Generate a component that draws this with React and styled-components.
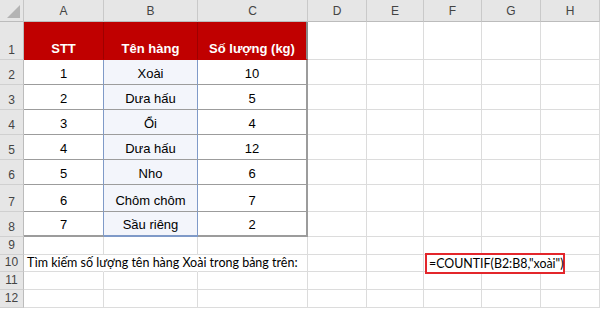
import React from 'react';
import styled, { createGlobalStyle } from 'styled-components';

const GlobalStyle = createGlobalStyle`
  html, body {
    margin: 0;
    padding: 0;
    background: #ffffff;
  }
  body {
    font-family: "Liberation Sans", Arial, sans-serif;
  }
`;

const COLS = ['A', 'B', 'C', 'D', 'E', 'F', 'G', 'H'];

const Sheet = styled.div`
  display: grid;
  grid-template-columns: 24px 80px 94px 110px 59px 57px 58px 59px 59px;
  grid-template-rows: 22px 38px 25px 25px 25px 25px 25px 27px 25px 18px 17px 18px 18px;
  width: 600px;
  height: 310px;
  background: #ffffff;
  overflow: hidden;
`;

const Corner = styled.div`
  position: relative;
  background: #e6e6e6;
  border-right: 1px solid #c6c6c6;
  border-bottom: 1px solid #bcbcbc;
  box-sizing: border-box;

  &::after {
    content: '';
    position: absolute;
    right: 3px;
    bottom: 3px;
    width: 0;
    height: 0;
    border-left: 13px solid transparent;
    border-bottom: 13px solid #b4b4b4;
  }
`;

const ColHead = styled.div`
  display: flex;
  align-items: center;
  justify-content: center;
  background: #e6e6e6;
  border-right: 1px solid #c9c9c9;
  border-bottom: 1px solid #bcbcbc;
  box-sizing: border-box;
  color: #444444;
  font-size: 12px;
  padding-top: 1px;
`;

const RowHead = styled.div`
  display: flex;
  align-items: flex-end;
  justify-content: center;
  padding-bottom: 2px;
  background: #e6e6e6;
  border-right: 1px solid #bcbcbc;
  border-bottom: 1px solid #d0d0d0;
  box-sizing: border-box;
  color: #444444;
  font-size: 12px;
`;

const Cell = styled.div`
  display: flex;
  align-items: ${p => (p.$middle ? 'center' : 'flex-end')};
  justify-content: ${p => (p.$left ? 'flex-start' : 'center')};
  padding: ${p => (p.$left ? '0 0 1px 3px' : '0 0 3px')};
  box-sizing: border-box;
  background: ${p => p.$bg || 'transparent'};
  border-right: 1px solid ${p => p.$rc || '#dcdcdc'};
  border-right-width: ${p => p.$rw || 1}px;
  border-bottom: 1px solid ${p => p.$bc || '#dcdcdc'};
  border-bottom-width: ${p => p.$bw || 1}px;
  color: ${p => p.$color || '#000000'};
  font-weight: ${p => (p.$bold ? 700 : 400)};
  font-size: 13px;
  white-space: nowrap;
  overflow: visible;
  position: relative;
`;

const Note = styled.span`
  font-family: Lato, "Liberation Sans", sans-serif;
  font-size: 12.5px;
  color: #000000;
`;

const Formula = styled.span`
  position: relative;
  z-index: 2;
  display: inline-flex;
  align-items: center;
  width: 141px;
  height: 21px;
  box-sizing: border-box;
  margin-left: 1px;
  padding: 0 0 0 2px;
  border: 2px solid #e3262b;
  background: #ffffff;
  font-family: Lato, "Liberation Sans", sans-serif;
  font-size: 12.4px;
  color: #000000;
`;

const header = ['STT', 'Tên hàng', 'Số lượng (kg)'];

const data = [
  [1, 'Xoài', 10],
  [2, 'Dưa hấu', 5],
  [3, 'Ổi', 4],
  [4, 'Dưa hấu', 12],
  [5, 'Nho', 6],
  [6, 'Chôm chôm', 7],
  [7, 'Sầu riêng', 2],
];

const TABLE_LINE = '#9c9c9c';
const BLUE = '#7f9ac8';

function tableCell(r, c) {
  // r: sheet row (1-based), c: column index (0 = A)
  if (r === 1) {
    return (
      <Cell
        key={c}
        $bg="#c00000"
        $color="#ffffff"
        $bold
        $rc={c === 2 ? '#8a8a8a' : '#9e0000'}
        $rw={c === 2 ? 2 : 1}
        $bc="#c00000"
      >
        {header[c]}
      </Cell>
    );
  }
  const value = data[r - 2][c];
  const last = r === 8;
  if (c === 1) {
    return (
      <Cell key={c} $bg="#f3f5fb" $rc={BLUE} $bc={last ? BLUE : TABLE_LINE} $bw={last ? 2 : 1}>
        {value}
      </Cell>
    );
  }
  return (
    <Cell
      key={c}
      $rc={c === 0 ? BLUE : TABLE_LINE}
      $rw={c === 2 ? 2 : 1}
      $bc={TABLE_LINE}
      $bw={last ? 2 : 1}
    >
      {value}
    </Cell>
  );
}

function rowCells(r) {
  return COLS.map((col, c) => {
    if (r <= 8 && c < 3) return tableCell(r, c);
    if (r === 10) {
      if (c === 0) {
        return (
          <Cell key={c} $left $middle $rc="transparent">
            <Note>Tìm kiếm số lượng tên hàng Xoài trong bảng trên:</Note>
          </Cell>
        );
      }
      if (c === 1) return <Cell key={c} $rc="transparent" />;
      if (c === 5) {
        return (
          <Cell key={c} $left $middle $rc="transparent" style={{ padding: 0 }}>
            <Formula>=COUNTIF(B2:B8,"xoài")</Formula>
          </Cell>
        );
      }
      if (c === 6) return <Cell key={c} $rc="transparent" />;
    }
    return <Cell key={c} />;
  });
}

const rows = Array.from({ length: 12 }, (_, i) => i + 1);

export default function App() {
  return (
    <>
      <GlobalStyle />
      <Sheet>
        <Corner />
        {COLS.map(col => (
          <ColHead key={col}>{col}</ColHead>
        ))}
        {rows.map(r => (
          <React.Fragment key={r}>
            <RowHead>{r}</RowHead>
            {rowCells(r)}
          </React.Fragment>
        ))}
      </Sheet>
    </>
  );
}
